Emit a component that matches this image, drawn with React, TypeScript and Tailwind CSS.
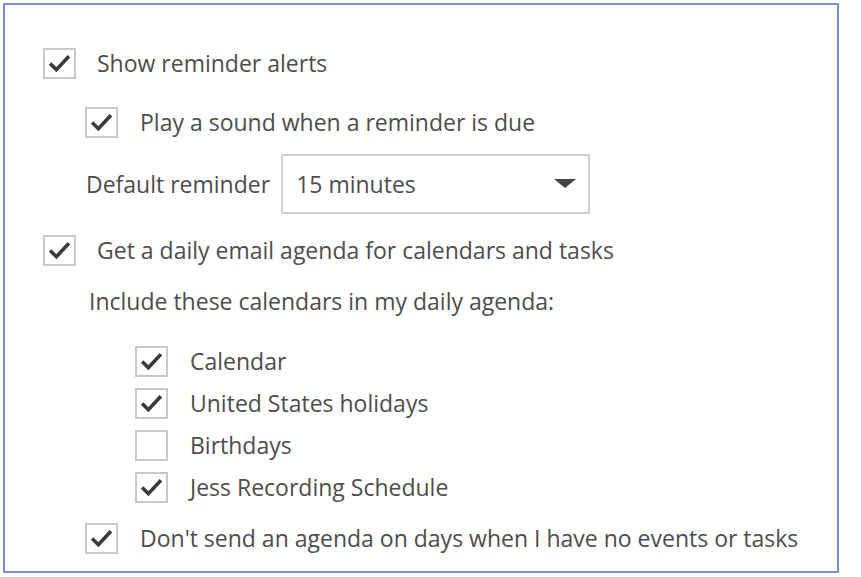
import React from "react";

function Box({ checked }: { checked: boolean }) {
  return (
    <div className="w-[33px] h-[31px] border-2 border-[#c9c9c9] bg-white flex items-center justify-center shrink-0">
      {checked && (
        <svg width="23" height="19" viewBox="0 0 22 18">
          <polyline points="2,9 8,15 20,2" fill="none" stroke="#3a3a3a" strokeWidth="3.4" strokeLinecap="butt" strokeLinejoin="miter" />
        </svg>
      )}
    </div>
  );
}

function Row({ checked, label, gap, className }: { checked: boolean; label: string; gap: string; className: string }) {
  return (
    <div className={"flex items-center " + className}>
      <Box checked={checked} />
      <span className={gap}>{label}</span>
    </div>
  );
}

export default function App() {
  return (
    <div className="w-[861px] h-[577px] bg-white p-[3px]" style={{ fontFamily: '"Open Sans", "Noto Sans", sans-serif' }}>
      <div className="w-[836px] h-[570px] border-2 border-[#7394d9] text-[#4d4d4d] text-[23px] leading-[31px] flex flex-col">
        <Row checked label="Show reminder alerts" gap="ml-[21px]" className="ml-[38px] mt-[43px]" />
        <Row checked label="Play a sound when a reminder is due" gap="ml-[22px]" className="ml-[80px] mt-[28px]" />
        <div className="flex items-center ml-[81px] mt-[16px]">
          <span>Default reminder</span>
          <div className="ml-[11px] w-[309px] h-[60px] border-2 border-[#d0d0d0] flex items-center justify-between pl-[13px] pr-[12px]">
            <span>15 minutes</span>
            <svg width="22" height="10" viewBox="0 0 22 10">
              <polygon points="0,0 22,0 11,9" fill="#444" />
            </svg>
          </div>
        </div>
        <Row checked label="Get a daily email agenda for calendars and tasks" gap="ml-[21px]" className="ml-[38px] mt-[21px]" />
        <div className="ml-[84px] mt-[20px]">Include these calendars in my daily agenda:</div>
        <div className="flex flex-col gap-[11px] ml-[130px] mt-[29px]">
          <Row checked label="Calendar" gap="ml-[22px]" className="" />
          <Row checked label="United States holidays" gap="ml-[22px]" className="" />
          <Row checked={false} label="Birthdays" gap="ml-[22px]" className="" />
          <Row checked label="Jess Recording Schedule" gap="ml-[22px]" className="" />
        </div>
        <Row checked label="Don't send an agenda on days when I have no events or tasks" gap="ml-[22px]" className="ml-[80px] mt-[20px]" />
      </div>
    </div>
  );
}
